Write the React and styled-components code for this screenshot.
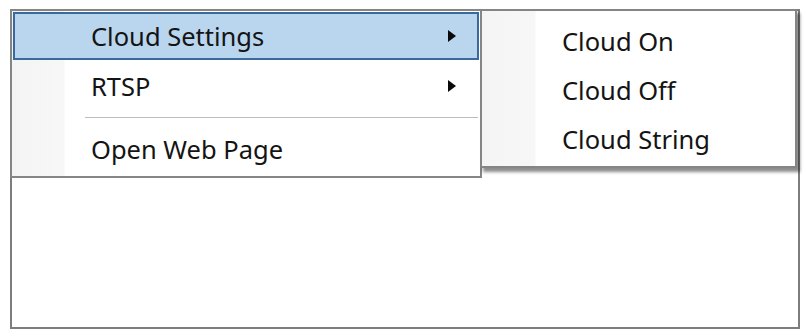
import React from "react";
import styled, { createGlobalStyle } from "styled-components";

const Global = createGlobalStyle`
  html, body { margin: 0; padding: 0; background: #ffffff; }
  body { font-family: "Noto Sans", "Open Sans", sans-serif; }
`;

const Page = styled.div`
  padding: 9px 10px 0 10px;
  width: 790px;
`;

const Window = styled.div`
  position: relative;
  box-sizing: border-box;
  width: 790px;
  height: 320px;
  border: 2px solid #7d7d7d;
  background: #ffffff;
`;

const Menu = styled.div`
  position: absolute;
  box-sizing: border-box;
  display: flex;
  flex-direction: column;
  border: 2px solid #858585;
  background: linear-gradient(
    to right,
    #f4f4f4 0,
    #f7f7f7 ${(p) => p.$gutter}px,
    #ffffff ${(p) => p.$gutter + 1}px
  );
  padding: ${(p) => p.$pad};
  box-shadow: ${(p) => (p.$shadow ? "3px 4px 3px rgba(0,0,0,0.45)" : "none")};
`;

const MainMenu = styled(Menu)`
  left: -2px;
  top: -2px;
  width: 472px;
  height: 169px;
`;

const SubMenu = styled(Menu)`
  left: 468px;
  top: -2px;
  width: 317px;
  height: 159px;
  z-index: 2;
`;

const Item = styled.div`
  position: relative;
  box-sizing: border-box;
  display: flex;
  align-items: center;
  height: ${(p) => p.$h}px;
  margin: ${(p) => p.$m};
  padding-left: ${(p) => p.$indent}px;
  font-size: 25.5px;
  color: #141414;
  white-space: nowrap;
  border: 2px solid ${(p) => (p.$active ? "#3a6a9c" : "transparent")};
  background: ${(p) => (p.$active ? "#bad6ef" : "transparent")};
`;

const Arrow = styled.span`
  position: absolute;
  right: 21px;
  top: 50%;
  margin-top: -6px;
  width: 0;
  height: 0;
  border-top: 6px solid transparent;
  border-bottom: 6px solid transparent;
  border-left: 8px solid #0a0a0a;
`;

const Separator = styled.div`
  height: 1px;
  margin: 7px 1px 8px 72px;
  background: #bdbdbd;
`;

export default function App() {
  return (
    <>
      <Global />
      <Page>
        <Window>
          <MainMenu $gutter={52} $pad="1px 1px">
            <Item $h={48} $m="0" $indent={76} $active>
              Cloud Settings
              <Arrow />
            </Item>
            <Item $h={48} $m="2px 0 0 0" $indent={76}>
              RTSP
              <Arrow />
            </Item>
            <Separator />
            <Item $h={48} $m="-1px 0 0 0" $indent={76}>
              Open Web Page
            </Item>
          </MainMenu>
          <SubMenu $gutter={53} $pad="5px 1px 2px" $shadow>
            <Item $h={49} $m="0" $indent={77}>
              Cloud On
            </Item>
            <Item $h={49} $m="0" $indent={77}>
              Cloud Off
            </Item>
            <Item $h={49} $m="0" $indent={77}>
              Cloud String
            </Item>
          </SubMenu>
        </Window>
      </Page>
    </>
  );
}
